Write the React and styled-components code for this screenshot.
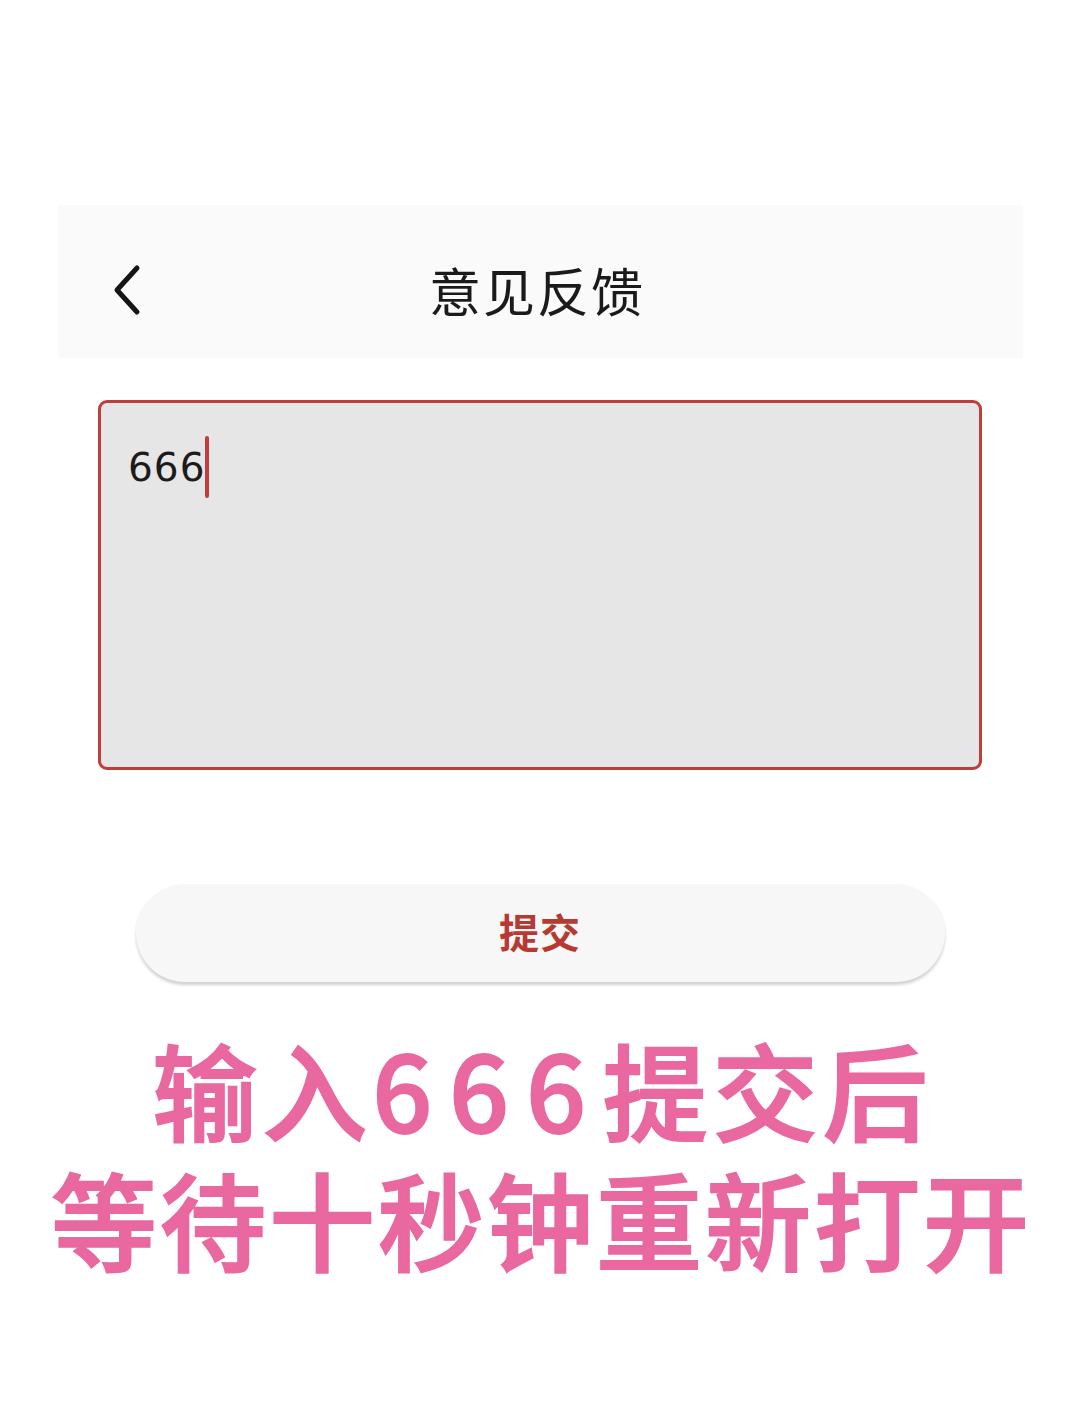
import styled, { createGlobalStyle } from "styled-components";

const GlobalStyle = createGlobalStyle`
  html, body {
    margin: 0;
    padding: 0;
    background: #ffffff;
  }
  body {
    font-family: "Noto Sans CJK SC", "Noto Sans", sans-serif;
  }
`;

const Page = styled.div`
  width: 1080px;
  height: 1426px;
  box-sizing: border-box;
  padding-top: 205px;
  display: flex;
  flex-direction: column;
  align-items: center;
  background: #ffffff;
`;

const TopBar = styled.header`
  width: 965px;
  height: 153px;
  background: #fafafa;
  display: grid;
  grid-template-columns: 120px 1fr 120px;
  align-items: center;
  padding-top: 16px;
  box-sizing: border-box;
`;

const BackButton = styled.button`
  border: none;
  background: none;
  padding: 0 0 0 52px;
  height: 60px;
  display: flex;
  align-items: center;
  cursor: pointer;
`;

const Title = styled.h1`
  margin: 0;
  text-align: center;
  font-size: 52px;
  font-weight: 400;
  color: #1a1a1a;
  letter-spacing: 2px;
  padding-right: 6px;
`;

const Field = styled.div`
  margin-top: 42px;
  width: 884px;
  height: 370px;
  box-sizing: border-box;
  border: 3px solid #c13d3c;
  border-radius: 9px;
  background: #e6e6e6;
  padding: 33px 0 0 27px;
`;

const Typed = styled.div`
  display: flex;
  align-items: center;
  font-family: "DejaVu Sans", "Noto Sans", sans-serif;
  font-size: 39px;
  letter-spacing: 1px;
  color: #1b1b1b;
`;

const Caret = styled.span`
  display: inline-block;
  width: 4px;
  height: 62px;
  border-radius: 2px;
  background: #c13d3c;
`;

const SubmitButton = styled.button`
  margin-top: 114px;
  width: 809px;
  height: 98px;
  padding-bottom: 6px;
  border: none;
  border-radius: 49px;
  background: #f7f7f7;
  box-shadow: 0 3px 3px rgba(0, 0, 0, 0.18);
  font-family: "Noto Sans CJK SC", sans-serif;
  font-size: 40px;
  font-weight: 700;
  color: #b63a32;
  letter-spacing: 1px;
  cursor: pointer;
`;

const Notice = styled.div`
  margin-top: 40px;
  display: flex;
  flex-direction: column;
  align-items: center;
  font-family: "Noto Sans CJK SC", sans-serif;
  font-weight: 500;
  color: #e9689f;
  -webkit-text-stroke: 2px #e9689f;
  line-height: 130px;
  white-space: nowrap;
`;

const NoticeLine = styled.div`
  font-size: ${(p) => p.size}px;
  letter-spacing: ${(p) => p.spacing}px;
  margin-left: ${(p) => p.spacing}px;
`;

const Digits = styled.span`
  letter-spacing: 17px;
`;

export default function App() {
  return (
    <Page>
      <GlobalStyle />
      <TopBar>
        <BackButton aria-label="back">
          <svg width="36" height="52" viewBox="0 0 36 52">
            <path
              d="M27 4 L7 26 L27 48"
              fill="none"
              stroke="#151515"
              strokeWidth="5"
              strokeLinecap="round"
              strokeLinejoin="round"
            />
          </svg>
        </BackButton>
        <Title>意见反馈</Title>
        <div />
      </TopBar>

      <Field>
        <Typed>
          666
          <Caret />
        </Typed>
      </Field>

      <SubmitButton>提交</SubmitButton>

      <Notice>
        <NoticeLine size={105} spacing={5}>
          输入<Digits>666</Digits>提交后
        </NoticeLine>
        <NoticeLine size={106} spacing={3}>
          等待十秒钟重新打开
        </NoticeLine>
      </Notice>
    </Page>
  );
}
